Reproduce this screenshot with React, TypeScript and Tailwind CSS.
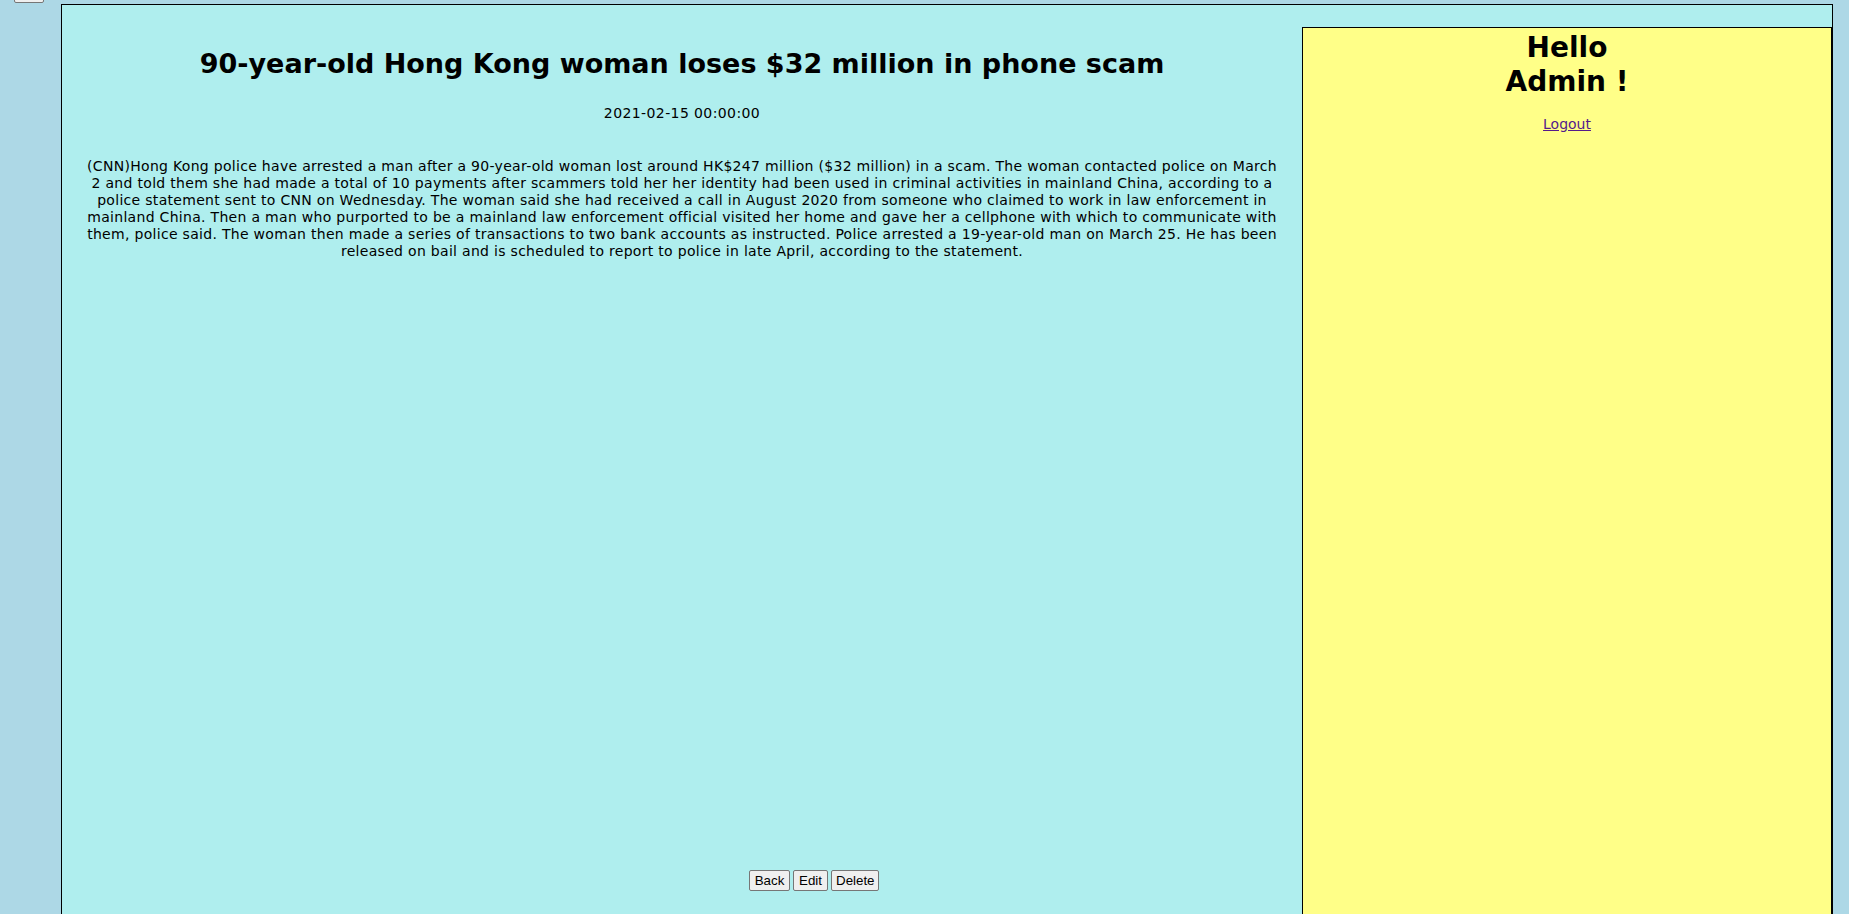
import React from "react";

const lines = [
  "(CNN)Hong Kong police have arrested a man after a 90-year-old woman lost around HK$247 million ($32 million) in a scam. The woman contacted police on March",
  "2 and told them she had made a total of 10 payments after scammers told her her identity had been used in criminal activities in mainland China, according to a",
  "police statement sent to CNN on Wednesday. The woman said she had received a call in August 2020 from someone who claimed to work in law enforcement in",
  "mainland China. Then a man who purported to be a mainland law enforcement official visited her home and gave her a cellphone with which to communicate with",
  "them, police said. The woman then made a series of transactions to two bank accounts as instructed. Police arrested a 19-year-old man on March 25. He has been",
  "released on bail and is scheduled to report to police in late April, according to the statement.",
];

const btn =
  "bg-[#efefef] border border-[#767676] rounded-[2px] px-[4px] py-[1px] h-[21px] text-[13.33px] leading-[15px] text-black font-['Liberation_Sans',Arial,sans-serif]";

export default function App() {
  return (
    <div className="min-h-screen h-[914px] overflow-hidden bg-[#add8e6] text-black font-['DejaVu_Sans',Verdana,sans-serif]">
      <div className="h-[4px] flex items-end">
        <button className={`${btn} ml-[14px] mb-[1px] w-[30px]`}>&nbsp;</button>
      </div>
      <div className="ml-[61px] w-[1772px] h-[1000px] border border-black bg-[#afeeee] flex">
        <div className="w-[1240px] flex flex-col pt-[42px] text-center">
          <h2 className="text-[27px] leading-[33px] font-bold">
            90-year-old Hong Kong woman loses $32 million in phone scam
          </h2>
          <div className="mt-[25px] text-[14px] leading-[17px] tracking-[0.4px]">2021-02-15 00:00:00</div>
          <p className="mt-[36px] text-[14px] leading-[17px] tracking-[0.3px] whitespace-nowrap">
            {lines.map((l, i) => (
              <React.Fragment key={i}>
                {l}
                <br />
              </React.Fragment>
            ))}
          </p>
          <div className="mt-[610px] flex gap-[3px] pl-[687px]">
            <button className={`${btn} w-[41px]`}>Back</button>
            <button className={`${btn} w-[35px]`}>Edit</button>
            <button className={`${btn} w-[48px]`}>Delete</button>
          </div>
        </div>
        <div className="mt-[22px] w-[530px] h-[960px] border border-black bg-[#ffff88] text-center">
          <h1 className="mt-[3px] text-[28px] leading-[34px] font-bold">
            Hello
            <br />
            Admin !
          </h1>
          <div className="mt-[17px] text-[14px] leading-[17px]">
            <a href="#" className="underline text-[#551a8b]">
              Logout
            </a>
          </div>
        </div>
      </div>
    </div>
  );
}
